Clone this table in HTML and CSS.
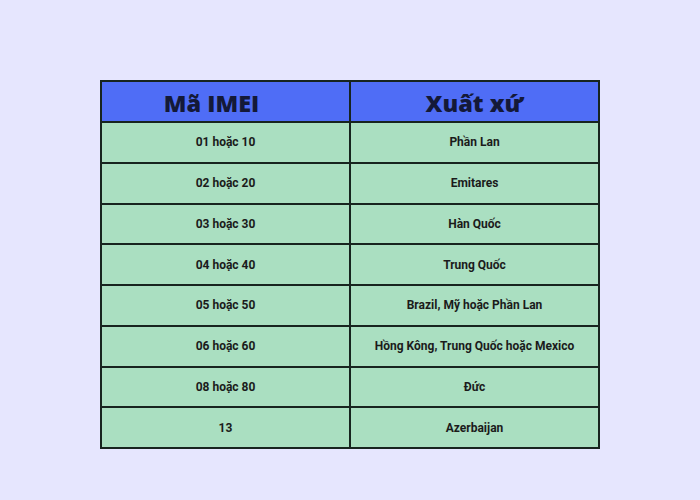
FILE: index.html
```html
<!DOCTYPE html>
<html lang="vi">
<head>
<meta charset="utf-8">
<link rel="stylesheet" href="styles.css">
</head>
<body>
<table class="imei">
  <thead>
    <tr><th class="col-code">Mã IMEI</th><th>Xuất xứ</th></tr>
  </thead>
  <tbody>
    <tr><td>01 hoặc 10</td><td>Phần Lan</td></tr>
    <tr><td>02 hoặc 20</td><td>Emitares</td></tr>
    <tr><td>03 hoặc 30</td><td>Hàn Quốc</td></tr>
    <tr><td>04 hoặc 40</td><td>Trung Quốc</td></tr>
    <tr><td>05 hoặc 50</td><td>Brazil, Mỹ hoặc Phần Lan</td></tr>
    <tr><td>06 hoặc 60</td><td>Hồng Kông, Trung Quốc hoặc Mexico</td></tr>
    <tr><td>08 hoặc 80</td><td>Đức</td></tr>
    <tr><td>13</td><td>Azerbaijan</td></tr>
  </tbody>
</table>
</body>
</html>
```
FILE: styles.css
```css
html, body {
  margin: 0;
  padding: 0;
  background: #e6e6fe;
  width: 700px;
  height: 500px;
}
body {
  padding-top: 80px;
  box-sizing: border-box;
}
.imei {
  margin: 0 auto;
  width: 500px;
  border-collapse: collapse;
  table-layout: fixed;
}
.imei th, .imei td {
  border: 2px solid #17241f;
  text-align: center;
  padding: 0;
}
.imei th {
  background: #4f6df6;
  color: #141938;
  font-family: "Open Sans", sans-serif;
  font-weight: 800;
  font-size: 23.5px;
  height: 36px;
  line-height: 36px;
  padding-top: 3px;
}
.imei th.col-code {
  padding-right: 28px;
}
.imei td {
  background: #aadfc1;
  color: #1b1b1b;
  font-family: Roboto, sans-serif;
  font-weight: 700;
  font-size: 12px;
  height: 38.75px;
}
```
